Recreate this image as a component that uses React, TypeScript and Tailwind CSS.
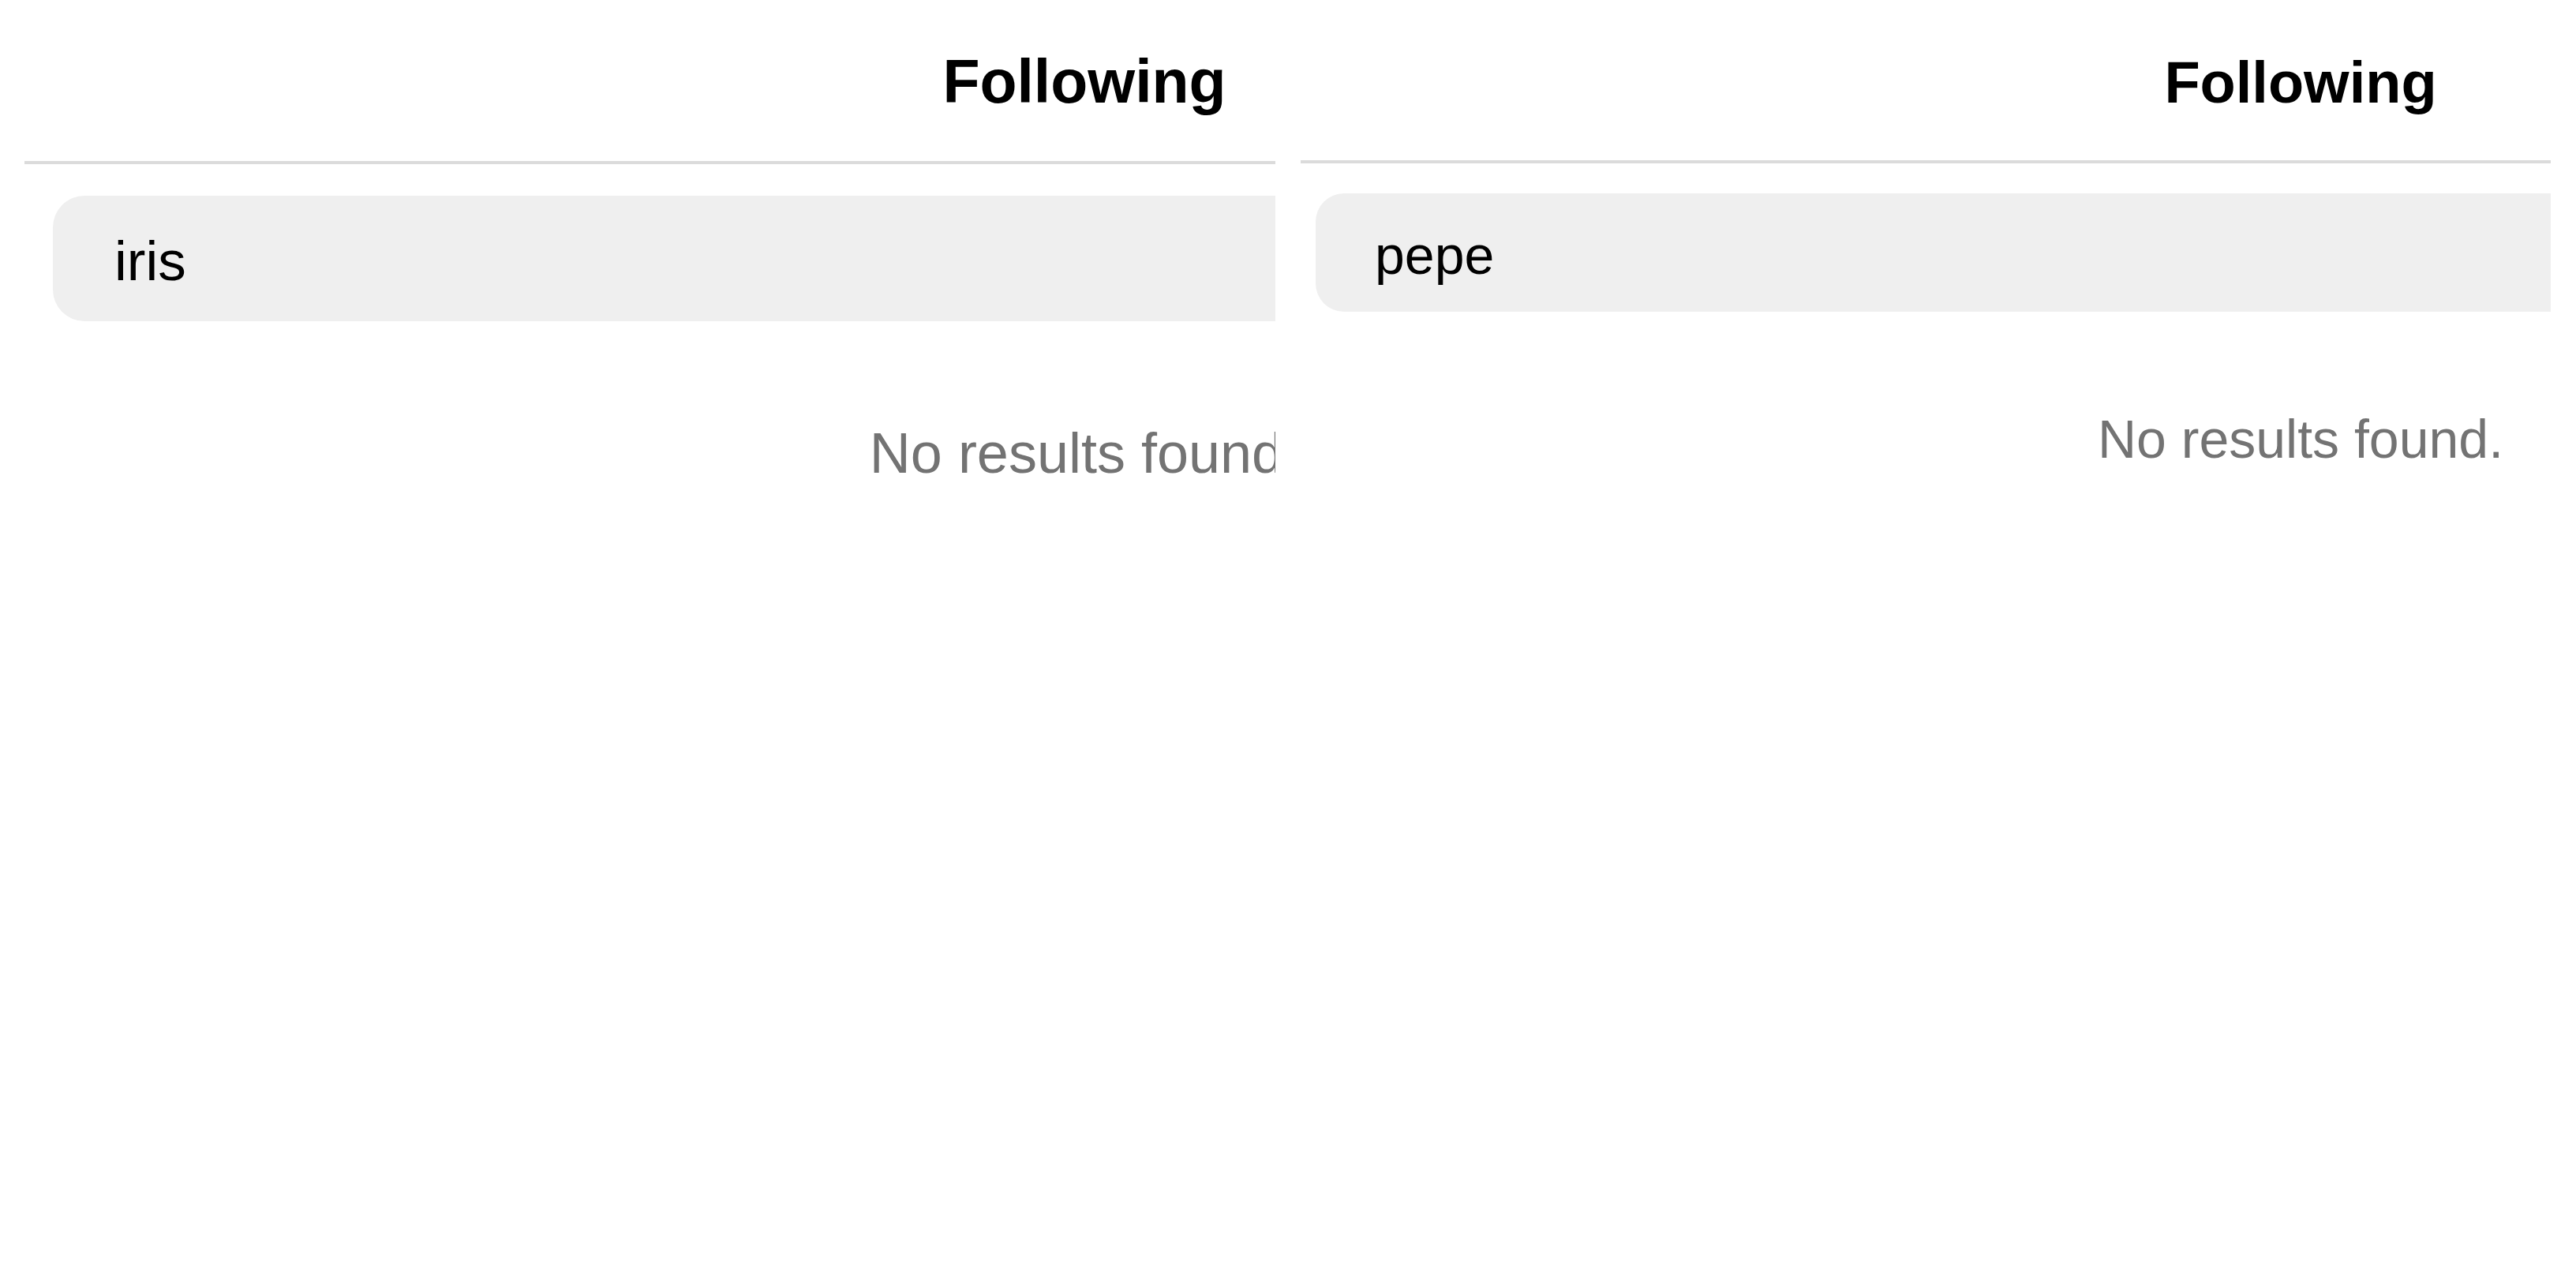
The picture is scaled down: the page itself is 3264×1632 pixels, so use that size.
import React from 'react';

const font = { fontFamily: '"Liberation Sans", Arial, sans-serif' };

const App: React.FC = () => {
  return (
    <div className="w-[3264px] h-[1632px] bg-white flex gap-[32px] pl-[31px] overflow-hidden" style={font}>
      {/* left capture, cut off on its right side */}
      <div className="w-[1585px] h-full overflow-hidden shrink-0">
        <div className="w-[2686px] flex flex-col">
          <div className="pt-[65px] pb-[62px] flex justify-center">
            <h1 className="text-[77px] leading-[77px] font-bold text-black">Following</h1>
          </div>
          <div className="h-[4px] bg-[#dbdbdb]" />
          <div className="mt-[40px] ml-[36px] h-[159px] rounded-[40px] bg-[#efefef] flex items-center pl-[78px] pt-[6px]">
            <span className="text-[71px] leading-[71px] text-black">iris</span>
          </div>
          <p className="mt-[131px] text-center text-[72px] leading-[72px] text-[#737373]">No results found.</p>
        </div>
      </div>

      {/* right capture */}
      <div className="w-[1584px] h-full overflow-hidden shrink-0">
        <div className="w-[2534px] flex flex-col">
          <div className="pt-[68px] pb-[61px] flex justify-center">
            <h1 className="text-[74px] leading-[74px] font-bold text-black">Following</h1>
          </div>
          <div className="h-[4px] bg-[#dbdbdb]" />
          <div className="mt-[38px] ml-[19px] h-[150px] rounded-[36px] bg-[#efefef] flex items-center pl-[75px] pt-[6px]">
            <span className="text-[68px] leading-[68px] text-black">pepe</span>
          </div>
          <p className="mt-[127px] text-center text-[68px] leading-[68px] text-[#737373]">No results found.</p>
        </div>
      </div>
    </div>
  );
};

export default App;
